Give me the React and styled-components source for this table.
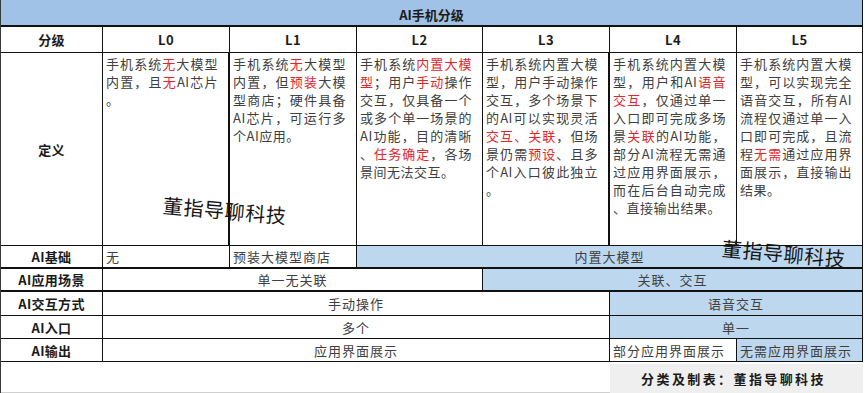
import React from 'react';
import styled, { createGlobalStyle } from 'styled-components';

const GlobalStyle = createGlobalStyle`
  html, body {
    margin: 0;
    padding: 0;
    background: #fff;
  }
  body {
    font-family: "Noto Sans CJK SC", "Liberation Sans", sans-serif;
  }
`;

const Page = styled.div`
  position: relative;
  width: 865px;
  height: 393px;
  overflow: hidden;
`;

const Sheet = styled.div`
  display: grid;
  grid-template-columns: 102px 127px 127px 126px 127px 127px 126px;
  grid-template-rows: 27px 26px 193px 23px 23px 24px 23px 23px 31px;
  width: 863px;
  border-left: 1px solid #3a3a3a;
`;

const Cell = styled.div`
  grid-column: span ${p => p.$span || 1};
  box-sizing: border-box;
  display: flex;
  align-items: center;
  justify-content: ${p => (p.$left ? 'flex-start' : 'center')};
  padding: 0 3px;
  background: ${p => (p.$blue ? '#bdd7ee' : '#fff')};
  border-right: ${p => (p.$thickRight ? 2 : 1)}px solid #111;
  border-bottom: ${p => (p.$thickBottom ? 2 : 1)}px solid #111;
  font-size: 13px;
  font-weight: ${p => (p.$bold ? 700 : 400)};
  color: ${p => (p.$bold ? '#1b1b1b' : '#404040')};
  letter-spacing: ${p => (p.$bold ? '0.3px' : '1px')};
  white-space: nowrap;
`;

const TitleCell = styled(Cell)`
  background: #9fc2e6;
  align-items: flex-end;
  padding-bottom: 1px;
  letter-spacing: 0;
`;

const DefCell = styled(Cell)`
  display: block;
  padding: 2px 10px 0 3px;
  white-space: normal;
`;

const Line = styled.div`
  line-height: 18px;
  text-align: justify;
  text-align-last: ${p => (p.$last ? 'left' : 'justify')};
  text-justify: inter-character;
  letter-spacing: 0.5px;
`;

const Red = styled.span`
  color: #e3262b;
`;

const FooterBlank = styled.div`
  grid-column: span 5;
  border-bottom: 1px solid #cfcfcf;
`;

const Credit = styled.div`
  grid-column: span 2;
  display: flex;
  align-items: center;
  justify-content: center;
  padding-right: 6px;
  margin-top: 2px;
  background: #efefef;
  font-size: 13px;
  font-weight: 700;
  letter-spacing: 2.4px;
  color: #1b1b1b;
`;

const Watermark = styled.div`
  position: absolute;
  left: ${p => p.$x}px;
  top: ${p => p.$y}px;
  font-size: 20px;
  font-weight: 400;
  letter-spacing: 0.7px;
  color: #161616;
  transform: rotate(5deg);
  transform-origin: left center;
  white-space: nowrap;
`;

const definitions = [
  [['手机系统', <Red key="a">无</Red>, '大模型'], ['内置，且', <Red key="b">无</Red>, 'AI芯片'], ['。']],
  [
    ['手机系统', <Red key="a">无</Red>, '大模型'],
    ['内置，但', <Red key="b">预装</Red>, '大模'],
    ['型商店；硬件具备'],
    ['AI芯片，可运行多'],
    ['个AI应用。'],
  ],
  [
    ['手机系统', <Red key="a">内置大模</Red>],
    [<Red key="b">型</Red>, '；用户', <Red key="c">手动</Red>, '操作'],
    ['交互，仅具备一个'],
    ['或多个单一场景的'],
    ['AI功能，目的清晰'],
    ['、', <Red key="d">任务确定</Red>, '，各场'],
    ['景间无法交互。'],
  ],
  [
    ['手机系统内置大模'],
    ['型，用户手动操作'],
    ['交互，多个场景下'],
    ['的AI可以实现灵活'],
    [<Red key="a">交互、关联</Red>, '，但场'],
    ['景仍需', <Red key="b">预设</Red>, '、且多'],
    ['个AI入口彼此独立'],
    ['。'],
  ],
  [
    ['手机系统内置大模'],
    ['型，用户和AI', <Red key="a">语音</Red>],
    [<Red key="b">交互</Red>, '，仅通过单一'],
    ['入口即可完成多场'],
    ['景', <Red key="c">关联</Red>, '的AI功能，'],
    ['部分AI流程无需通'],
    ['过应用界面展示，'],
    ['而在后台自动完成'],
    ['、直接输出结果。'],
  ],
  [
    ['手机系统内置大模'],
    ['型，可以实现完全'],
    ['语音交互，所有AI'],
    ['流程仅通过单一入'],
    ['口即可完成，且流'],
    ['程', <Red key="a">无需</Red>, '通过应用界'],
    ['面展示，直接输出'],
    ['结果。'],
  ],
];

function Definition({ lines, thickRight }) {
  return (
    <DefCell $thickRight={thickRight}>
      {lines.map((parts, i) => (
        <Line key={i} $last={i === lines.length - 1}>
          {parts}
        </Line>
      ))}
    </DefCell>
  );
}

export default function App() {
  return (
    <Page>
      <GlobalStyle />
      <Sheet>
        <TitleCell $span={7} $bold $thickBottom>AI手机分级</TitleCell>

        <Cell $bold>分级</Cell>
        {['L0', 'L1', 'L2', 'L3', 'L4', 'L5'].map(l => (
          <Cell key={l} $bold>{l}</Cell>
        ))}

        <Cell $bold>定义</Cell>
        {definitions.map((lines, i) => (
          <Definition key={i} lines={lines} thickRight={i === 0 || i === 3} />
        ))}

        <Cell $bold $thickBottom>AI基础</Cell>
        <Cell $left $thickBottom>无</Cell>
        <Cell $left $thickBottom>预装大模型商店</Cell>
        <Cell $span={4} $blue $thickBottom>内置大模型</Cell>

        <Cell $bold $thickBottom>AI应用场景</Cell>
        <Cell $span={3} $thickBottom>单一无关联</Cell>
        <Cell $span={3} $blue $thickBottom>关联、交互</Cell>

        <Cell $bold>AI交互方式</Cell>
        <Cell $span={4}>手动操作</Cell>
        <Cell $span={2} $blue>语音交互</Cell>

        <Cell $bold>AI入口</Cell>
        <Cell $span={4}>多个</Cell>
        <Cell $span={2} $blue>单一</Cell>

        <Cell $bold>AI输出</Cell>
        <Cell $span={4}>应用界面展示</Cell>
        <Cell $left>部分应用界面展示</Cell>
        <Cell $left $blue>无需应用界面展示</Cell>

        <FooterBlank />
        <Credit>分类及制表：董指导聊科技</Credit>
      </Sheet>

      <Watermark $x={163} $y={190}>董指导聊科技</Watermark>
      <Watermark $x={722} $y={233}>董指导聊科技</Watermark>
    </Page>
  );
}
